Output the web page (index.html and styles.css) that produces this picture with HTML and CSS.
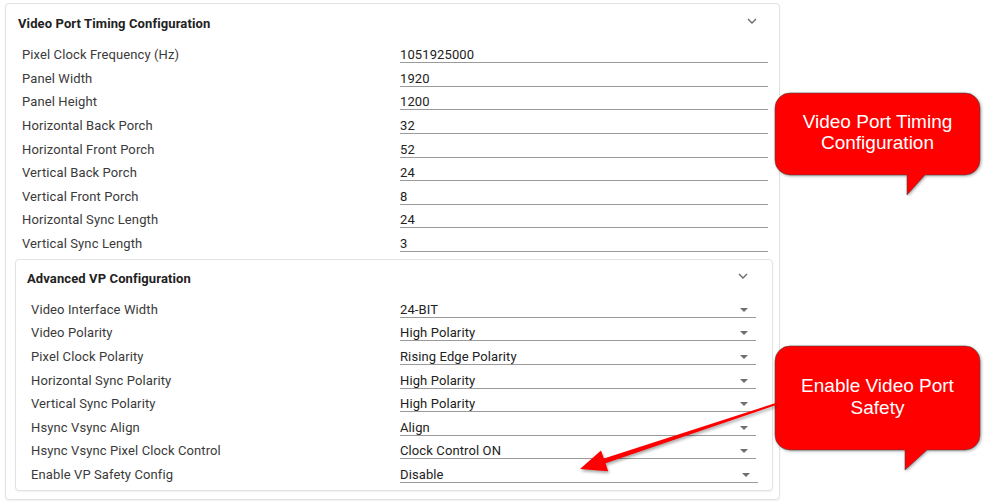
FILE: index.html
```html
<!DOCTYPE html>
<html>
<head>
<meta charset="utf-8">
<link rel="stylesheet" href="styles.css">
</head>
<body>
<div class="page">
  <section class="card outer">
    <header class="card-head">
      <h2 class="title">Video Port Timing Configuration</h2>
      <svg class="chev" width="10" height="6" viewBox="0 0 10 6"><path d="M1 1 L5 5 L9 1" fill="none" stroke="#6b6b6b" stroke-width="1.4"/></svg>
    </header>
    <div class="card-body">
      <div class="fields outer-fields">
        <div class="row"><span class="label">Pixel Clock Frequency (Hz)</span><span class="value">1051925000</span></div>
        <div class="row"><span class="label">Panel Width</span><span class="value">1920</span></div>
        <div class="row"><span class="label">Panel Height</span><span class="value">1200</span></div>
        <div class="row"><span class="label">Horizontal Back Porch</span><span class="value">32</span></div>
        <div class="row"><span class="label">Horizontal Front Porch</span><span class="value">52</span></div>
        <div class="row"><span class="label">Vertical Back Porch</span><span class="value">24</span></div>
        <div class="row"><span class="label">Vertical Front Porch</span><span class="value">8</span></div>
        <div class="row"><span class="label">Horizontal Sync Length</span><span class="value">24</span></div>
        <div class="row"><span class="label">Vertical Sync Length</span><span class="value">3</span></div>
      </div>
      <section class="card inner">
        <header class="card-head inner-head">
          <h3 class="title">Advanced VP Configuration</h3>
          <svg class="chev" width="10" height="6" viewBox="0 0 10 6"><path d="M1 1 L5 5 L9 1" fill="none" stroke="#6b6b6b" stroke-width="1.4"/></svg>
        </header>
        <div class="fields inner-fields">
          <div class="row"><span class="label">Video Interface Width</span><span class="value select"><span>24-BIT</span><i class="caret"></i></span></div>
          <div class="row"><span class="label">Video Polarity</span><span class="value select"><span>High Polarity</span><i class="caret"></i></span></div>
          <div class="row"><span class="label">Pixel Clock Polarity</span><span class="value select"><span>Rising Edge Polarity</span><i class="caret"></i></span></div>
          <div class="row"><span class="label">Horizontal Sync Polarity</span><span class="value select"><span>High Polarity</span><i class="caret"></i></span></div>
          <div class="row"><span class="label">Vertical Sync Polarity</span><span class="value select"><span>High Polarity</span><i class="caret"></i></span></div>
          <div class="row"><span class="label">Hsync Vsync Align</span><span class="value select"><span>Align</span><i class="caret"></i></span></div>
          <div class="row"><span class="label">Hsync Vsync Pixel Clock Control</span><span class="value select"><span>Clock Control ON</span><i class="caret"></i></span></div>
          <div class="row"><span class="label">Enable VP Safety Config</span><span class="value select last"><span>Disable</span><i class="caret"></i></span></div>
        </div>
      </section>
    </div>
  </section>

  <svg class="annot" width="984" height="504" viewBox="0 0 984 504">
    <path class="bubble" d="M790,93 H965 A15,15 0 0 1 980,108 V160 A15,15 0 0 1 965,175 H925 L907,195 V175 H790 A15,15 0 0 1 775,160 V108 A15,15 0 0 1 790,93 Z"/>
    <text class="btext" x="877.5" y="127.5">Video Port Timing</text>
    <text class="btext" x="877.5" y="148.5">Configuration</text>

    <path class="bubble" d="M790,346 H965 A15,15 0 0 1 980,361 V435 A15,15 0 0 1 965,450 H927 L905,470 V450 H790 A15,15 0 0 1 775,435 V361 A15,15 0 0 1 790,346 Z"/>
    <text class="btext" x="877.5" y="391.5">Enable Video Port</text>
    <text class="btext" x="877.5" y="413.5">Safety</text>

    <polygon class="arrow" points="580,469 601,450.4 603.9,458.4 775.7,403.1 776.3,404.9 605.5,463.2 608.2,471.2"/>
  </svg>
</div>
</body>
</html>
```

FILE: styles.css
```css
* { box-sizing: border-box; }
html, body { margin: 0; padding: 0; background: #ffffff; }
body {
  font-family: Roboto, "Liberation Sans", Arial, sans-serif;
  font-size: 13px;
  letter-spacing: 0.11px;
  color: #333333;
}
.page {
  position: relative;
  width: 984px;
  height: 504px;
  padding: 3px 0 0 5px;
}
.card {
  background: #ffffff;
  border: 1px solid #e2e2e2;
  border-radius: 4px;
  box-shadow: 0 1px 2px rgba(0, 0, 0, 0.06);
}
.outer { width: 775px; }
.card-head {
  display: flex;
  justify-content: space-between;
  align-items: flex-start;
  height: 42px;
  padding: 11px 22px 0 12px;
}
.title {
  margin: 0;
  font-size: 13px;
  line-height: 18px;
  font-weight: 700;
  color: #222222;
}
.chev { display: block; margin-top: 3px; }
.card-body { padding: 0 6px 8px 9px; }
.outer-fields { padding: 0 5px 0 7px; }
.row {
  display: flex;
  align-items: flex-start;
  height: 23.625px;
}
.label {
  flex: 0 0 auto;
  line-height: 18px;
  color: #3a3a3a;
}
.outer-fields .label { width: 378px; }
.value {
  flex: 1 1 auto;
  height: 17px;
  line-height: 18px;
  color: #222222;
  border-bottom: 1px solid #9b9b9b;
}
.inner { width: 758px; }
.inner-head {
  height: 41px;
  padding: 10px 24px 0 11px;
}
.inner-fields { padding: 0 16px 0 15px; }
.inner-fields .label { width: 369px; }
.select {
  display: flex;
  justify-content: space-between;
  align-items: flex-start;
  padding-right: 8px;
}
.select.last { margin-right: -2px; padding-right: 8px; }
.caret {
  display: block;
  width: 0;
  height: 0;
  margin-top: 7px;
  border-left: 4px solid transparent;
  border-right: 4px solid transparent;
  border-top: 4px solid #6f6f6f;
}
.annot {
  position: absolute;
  left: 0;
  top: 0;
  pointer-events: none;
}
.bubble {
  fill: #ff0000;
  stroke: rgba(70, 70, 70, 0.55);
  stroke-width: 1;
  filter: drop-shadow(1.5px 1.5px 1.5px rgba(0, 0, 0, 0.35));
}
.btext {
  font-family: "Liberation Sans", Arial, sans-serif;
  font-size: 19px;
  letter-spacing: 0;
  fill: #ffffff;
  text-anchor: middle;
}
.arrow {
  fill: #ff0000;
  filter: drop-shadow(1.5px 2px 1.5px rgba(0, 0, 0, 0.35));
}
```
